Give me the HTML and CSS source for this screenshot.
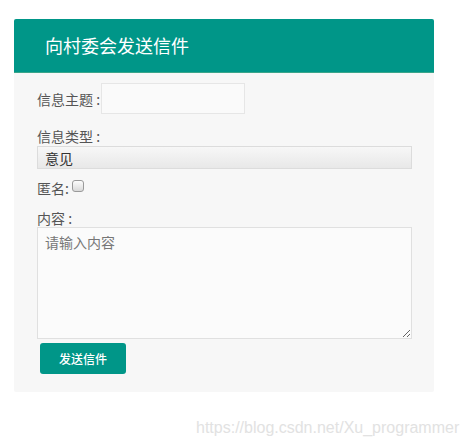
FILE: index.html
```html
<!DOCTYPE html>
<html lang="zh">
<head>
<meta charset="utf-8">
<title>向村委会发送信件</title>
<link rel="stylesheet" href="styles.css">
</head>
<body>
<div class="card">
  <div class="card-header">向村委会发送信件</div>
  <form class="card-body">
    <div class="row row-inline">
      <label class="label">信息主题 :</label>
      <input class="input" type="text">
    </div>
    <div class="row">
      <label class="label">信息类型 :</label>
      <select class="select"><option>意见</option></select>
    </div>
    <div class="row row-check">
      <label class="label">匿名:</label>
      <input class="check" type="checkbox">
    </div>
    <div class="row">
      <label class="label">内容 :</label>
      <textarea class="textarea" placeholder="请输入内容"></textarea>
    </div>
    <button class="btn" type="button">发送信件</button>
  </form>
</div>
<div class="watermark">https://blog.csdn.net/Xu_programmer</div>
</body>
</html>
```
FILE: styles.css
```css
html, body {
  margin: 0;
  padding: 0;
  background: #fff;
}
body {
  font-family: "Noto Sans CJK SC", "Liberation Sans", sans-serif;
  position: relative;
  width: 466px;
  height: 447px;
  overflow: hidden;
}
.card {
  margin: 19px 0 0 14px;
  width: 420px;
  background: #f7f7f7;
  border-radius: 2px;
  overflow: hidden;
}
.card-header {
  height: 53px;
  border-bottom: 1px solid #3aa58a;
  background: #009688;
  color: #fff;
  font-size: 18px;
  line-height: 53px;
  padding-left: 31px;
}
.card-body {
  display: flex;
  flex-direction: column;
  padding: 10px 0 18px 23px;
}
.row {
  display: flex;
  flex-direction: column;
}
.row-inline {
  flex-direction: row;
  align-items: center;
}
.row-check {
  flex-direction: row;
  align-items: center;
  margin-top: 11px;
}
.label {
  font-size: 14px;
  line-height: 16px;
  color: #555;
}
.row-inline .label {
  width: 64px;
}
.input {
  box-sizing: border-box;
  width: 144px;
  height: 31px;
  margin: 0;
  border: 1px solid #e6e6e6;
  background: #fafafa;
  outline: none;
}
.row-inline + .row {
  margin-top: 14px;
}
.row-inline + .row .label {
  margin-bottom: 2px;
}
.select {
  appearance: none;
  -webkit-appearance: none;
  box-sizing: border-box;
  width: 375px;
  height: 23px;
  margin: 0;
  border: 1px solid #dcdcdc;
  border-radius: 0;
  background: linear-gradient(#f7f7f7, #e8e8e8);
  font-family: "Noto Sans CJK SC", sans-serif;
  font-size: 14px;
  color: #333;
  padding: 0 0 0 7px;
  line-height: 20px;
}
.check {
  appearance: none;
  -webkit-appearance: none;
  box-sizing: border-box;
  width: 12px;
  height: 12px;
  margin: -5px 0 0 3px;
  border: 1px solid #9a9a9a;
  border-radius: 3px;
  background: linear-gradient(#fdfdfd, #d9d9d9);
}
.row-check + .row {
  margin-top: 14px;
}
.row-check + .row .label {
  margin-bottom: 1px;
}
.textarea {
  box-sizing: border-box;
  width: 375px;
  height: 112px;
  margin: 0;
  border: 1px solid #e0e0e0;
  background: #fbfbfb;
  padding: 5px 7px;
  font-family: "Noto Sans CJK SC", sans-serif;
  font-size: 14px;
  line-height: 18px;
  resize: vertical;
  outline: none;
}
.textarea::placeholder {
  color: #777;
}
.btn {
  align-self: flex-start;
  margin: 4px 0 0 3px;
  width: 86px;
  height: 31px;
  border: none;
  border-radius: 3px;
  background: #009688;
  color: #fff;
  font-family: "Noto Sans CJK SC", sans-serif;
  font-size: 12px;
  font-weight: 500;
  padding: 0;
}
.watermark {
  position: absolute;
  left: 196px;
  top: 418px;
  font-family: "Liberation Sans", Arial, sans-serif;
  font-size: 16px;
  line-height: 20px;
  color: #e2e2e2;
  white-space: nowrap;
}
```
